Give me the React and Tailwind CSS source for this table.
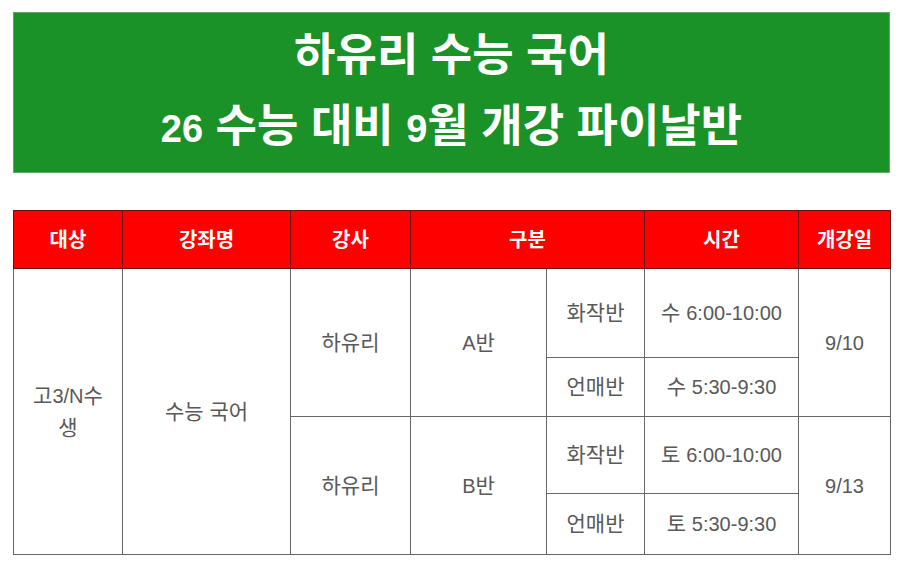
const font = { fontFamily: '"Liberation Sans", "Noto Sans CJK KR", sans-serif' };

const th = "border border-[#6b1010] bg-[#fe0000] text-white font-bold text-[20px] text-center align-middle";
const td = "border border-[#666] text-[#595959] text-[21px] text-center align-middle font-normal";

// Hangul in the picture is set wider than the digits, so Latin runs get a smaller size
function T({ text, small }) {
  const parts = text.split(/([0-9A-Za-z/:\-]+)/).filter(Boolean);
  return parts.map((p, i) =>
    /[0-9A-Za-z]/.test(p) ? (
      <span key={i} className={small}>
        {p}
      </span>
    ) : (
      <span key={i}>{p}</span>
    )
  );
}

const latinBody = "text-[20px]";

export default function App() {
  return (
    <div className="w-[900px] h-[561px] bg-white px-[13px] pt-[12px]" style={font}>
      <div className="h-[161px] w-[877px] bg-[#1a9227] border border-[#5fa868] flex flex-col items-center justify-center text-white font-bold text-[45px] leading-[71px]">
        <div>하유리 수능 국어</div>
        <div>
          <T text="26 수능 대비 9월 개강 파이날반" small="text-[38px]" />
        </div>
      </div>

      <table className="mt-[37px] w-[878px] border-collapse table-fixed border border-[#444]">
        <colgroup>
          <col className="w-[109px]" />
          <col className="w-[168px]" />
          <col className="w-[120px]" />
          <col className="w-[136px]" />
          <col className="w-[98px]" />
          <col className="w-[154px]" />
          <col className="w-[92px]" />
        </colgroup>
        <thead>
          <tr className="h-[58px]">
            <th className={th}>대상</th>
            <th className={th}>강좌명</th>
            <th className={th}>강사</th>
            <th className={th} colSpan={2}>구분</th>
            <th className={th}>시간</th>
            <th className={th}>개강일</th>
          </tr>
        </thead>
        <tbody>
          <tr className="h-[89px]">
            <td className={`${td} leading-[32px]`} rowSpan={4}>
              <T text="고3/N수" small={latinBody} />
              <br />생
            </td>
            <td className={td} rowSpan={4}>수능 국어</td>
            <td className={td} rowSpan={2}>하유리</td>
            <td className={td} rowSpan={2}>
              <T text="A반" small={latinBody} />
            </td>
            <td className={td}>화작반</td>
            <td className={td}>
              <T text="수 6:00-10:00" small={latinBody} />
            </td>
            <td className={td} rowSpan={2}>
              <T text="9/10" small={latinBody} />
            </td>
          </tr>
          <tr className="h-[59px]">
            <td className={td}>언매반</td>
            <td className={td}>
              <T text="수 5:30-9:30" small={latinBody} />
            </td>
          </tr>
          <tr className="h-[77px]">
            <td className={td} rowSpan={2}>하유리</td>
            <td className={td} rowSpan={2}>
              <T text="B반" small={latinBody} />
            </td>
            <td className={td}>화작반</td>
            <td className={td}>
              <T text="토 6:00-10:00" small={latinBody} />
            </td>
            <td className={td} rowSpan={2}>
              <T text="9/13" small={latinBody} />
            </td>
          </tr>
          <tr className="h-[61px]">
            <td className={td}>언매반</td>
            <td className={td}>
              <T text="토 5:30-9:30" small={latinBody} />
            </td>
          </tr>
        </tbody>
      </table>
    </div>
  );
}
